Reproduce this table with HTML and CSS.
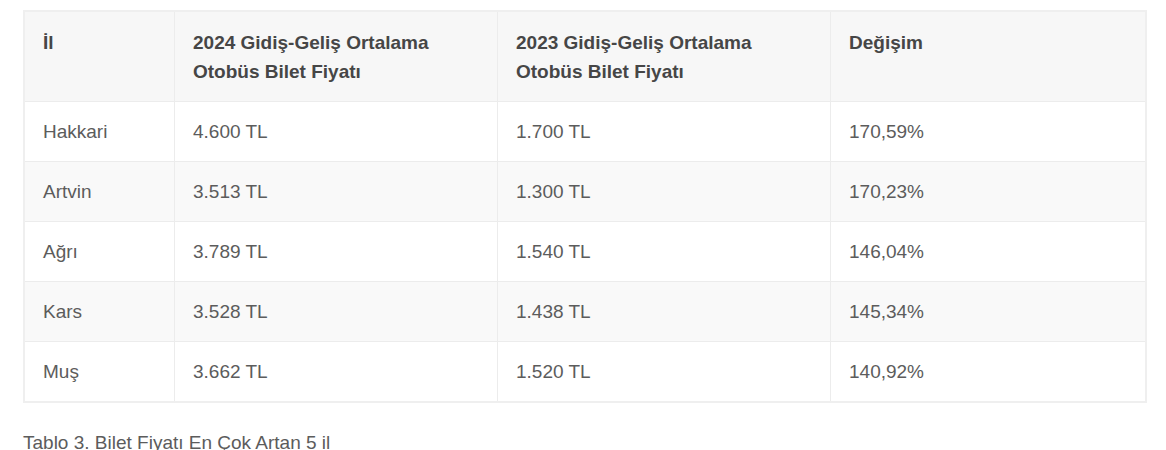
FILE: index.html
```html
<!DOCTYPE html>
<html lang="tr">
<head>
<meta charset="utf-8">
<link rel="stylesheet" href="styles.css">
</head>
<body>
<div class="wrap">
<table class="data">
<thead>
<tr>
<th class="c1">İl</th>
<th class="c2">2024 Gidiş-Geliş Ortalama<br>Otobüs Bilet Fiyatı</th>
<th class="c3">2023 Gidiş-Geliş Ortalama<br>Otobüs Bilet Fiyatı</th>
<th class="c4">Değişim</th>
</tr>
</thead>
<tbody>
<tr><td>Hakkari</td><td>4.600 TL</td><td>1.700 TL</td><td>170,59%</td></tr>
<tr><td>Artvin</td><td>3.513 TL</td><td>1.300 TL</td><td>170,23%</td></tr>
<tr><td>Ağrı</td><td>3.789 TL</td><td>1.540 TL</td><td>146,04%</td></tr>
<tr><td>Kars</td><td>3.528 TL</td><td>1.438 TL</td><td>145,34%</td></tr>
<tr><td>Muş</td><td>3.662 TL</td><td>1.520 TL</td><td>140,92%</td></tr>
</tbody>
</table>
<p class="caption">Tablo 3. Bilet Fiyatı En Çok Artan 5 il</p>
</div>
</body>
</html>
```
FILE: styles.css
```css
html, body {
  margin: 0;
  padding: 0;
  background: #ffffff;
}
.wrap {
  padding: 10px 20px 0 23px;
  font-family: "Liberation Sans", Arial, sans-serif;
  font-size: 19px;
  color: #5c5c5c;
}
.data {
  width: 1124px;
  border-collapse: collapse;
  border: 2px solid #efefef;
}
.data th,
.data td {
  border: 1px solid #ececec;
  padding: 15px 18px;
  text-align: left;
  vertical-align: top;
  line-height: 29px;
}
.data th {
  font-weight: bold;
  color: #464646;
  background: #f7f7f7;
  padding-top: 16px;
  padding-bottom: 15px;
}
.data .c1 { width: 113px; }
.data .c2 { width: 286px; }
.data .c3 { width: 296px; }
.data tbody tr:nth-child(even) td {
  background: #f9f9f9;
}
.caption {
  margin: 28px 0 0 0;
  line-height: 24px;
  color: #5c5c5c;
}
```
